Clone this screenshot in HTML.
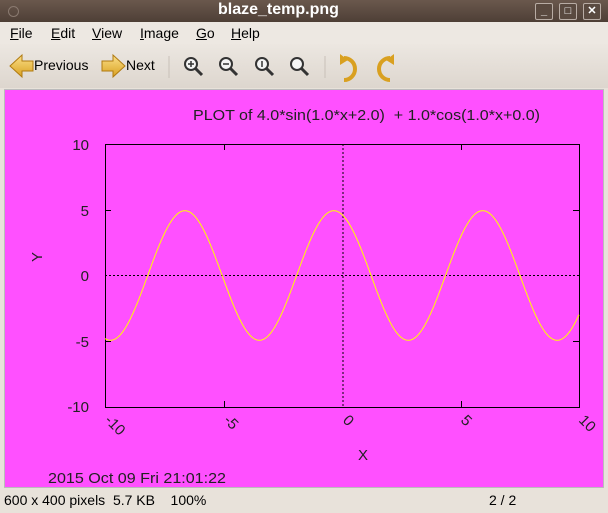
<!DOCTYPE html><html><head><style>
body{margin:0;width:608px;height:513px;overflow:hidden;background:#e8e2da;font-family:"Liberation Sans",sans-serif;font-size:14px;position:relative}
.t{position:absolute}
#title{left:0;top:0;width:608px;height:22px;background:linear-gradient(#6a584d,#4e3f36);color:#fff;font-weight:bold;font-size:16px;line-height:20px}
.wb{position:absolute;top:3px;width:16px;height:15px;border:1px solid #b8aca4;border-radius:2px;background:#5a4a40;color:#fff;font-size:11px;line-height:15px;text-align:center}
#menu{left:0;top:22px;width:608px;height:22px;background:#ede8e2}
#menu span{position:absolute;top:3px}
#tb{left:0;top:44px;width:608px;height:44px;background:linear-gradient(#ece7e1,#ddd6ce)}
#pink{left:4px;top:89px;width:600px;height:399px;background:#ff50ff;border:1px solid #bbb;box-sizing:border-box}
#status{left:0;top:488px;width:608px;height:25px;background:#e8e2da;font-size:14px}
</style></head><body>
<div class="t" id="title"><div style="position:absolute;left:8px;top:6px;width:9px;height:9px;border-radius:50%;border:1px solid #8a7a70"></div><span style="position:absolute;left:218px;top:0">blaze_temp.png</span>
<div class="wb" style="left:535px">_</div><div class="wb" style="left:559px">□</div><div class="wb" style="left:583px">✕</div></div>
<div class="t" id="menu"><span style="left:10px"><u>F</u>ile</span><span style="left:51px"><u>E</u>dit</span><span style="left:92px"><u>V</u>iew</span><span style="left:140px"><u>I</u>mage</span><span style="left:196px"><u>G</u>o</span><span style="left:231px"><u>H</u>elp</span></div>
<div class="t" id="tb">
<svg width="608" height="44" style="position:absolute;left:0;top:0">
<defs><linearGradient id="g" x1="0" y1="0" x2="0" y2="1"><stop offset="0" stop-color="#fbe08a"/><stop offset="1" stop-color="#d9a020"/></linearGradient></defs>
<path d="M10 22 L22 11 L22 17 L33 17 L33 27 L22 27 L22 33 Z" fill="url(#g)" stroke="#b07a10"/>
<path d="M125 22 L113 11 L113 17 L102 17 L102 27 L113 27 L113 33 Z" fill="url(#g)" stroke="#b07a10"/>
<line x1="169" y1="12" x2="169" y2="34" stroke="#c8c0b8"/>
<line x1="325" y1="12" x2="325" y2="34" stroke="#c8c0b8"/>
<g fill="#f4f4f4" stroke="#333" stroke-width="2">
<circle cx="191" cy="20" r="6"/><line x1="195" y1="24" x2="202" y2="31" stroke-width="3"/>
<circle cx="226" cy="20" r="6"/><line x1="230" y1="24" x2="237" y2="31" stroke-width="3"/>
<circle cx="262" cy="20" r="6"/><line x1="266" y1="24" x2="273" y2="31" stroke-width="3"/>
<circle cx="297" cy="20" r="6"/><line x1="301" y1="24" x2="308" y2="31" stroke-width="3"/>
</g>
<g stroke="#333" stroke-width="1.5"><line x1="188" y1="20" x2="194" y2="20"/><line x1="191" y1="17" x2="191" y2="23"/><line x1="223" y1="20" x2="229" y2="20"/><line x1="262" y1="17" x2="262" y2="23"/></g>
<path d="M344 14 A8 8 0 1 1 344 36" fill="none" stroke="#d9a020" stroke-width="4"/><path d="M340 10 L348 16 L340 21 Z" fill="#d9a020"/>
<path d="M390 14 A8 8 0 1 0 390 36" fill="none" stroke="#d9a020" stroke-width="4"/><path d="M394 10 L386 16 L394 21 Z" fill="#d9a020"/>
</svg>
<span class="t" style="left:34px;top:13px">Previous</span><span class="t" style="left:126px;top:13px">Next</span></div>
<div class="t" id="pink"></div>
<svg width="608" height="513" style="position:absolute;left:0;top:0" font-family="Liberation Sans" font-size="15">
<text x="193" y="120" fill="#222" textLength="347" lengthAdjust="spacingAndGlyphs" xml:space="preserve">PLOT of 4.0*sin(1.0*x+2.0)  + 1.0*cos(1.0*x+0.0)</text>
<rect x="105.5" y="144.5" width="474" height="263" fill="none" stroke="#000"/>
<line x1="343" y1="144" x2="343" y2="407" stroke="#000" stroke-dasharray="2,2"/>
<line x1="105" y1="275.5" x2="579" y2="275.5" stroke="#000" stroke-dasharray="2,2"/>
<g stroke="#000"><line x1="105" y1="210.5" x2="111" y2="210.5"/><line x1="105" y1="341.5" x2="111" y2="341.5"/><line x1="573" y1="210.5" x2="579" y2="210.5"/><line x1="573" y1="341.5" x2="579" y2="341.5"/>
<line x1="224.5" y1="401" x2="224.5" y2="407"/><line x1="461.5" y1="401" x2="461.5" y2="407"/><line x1="224.5" y1="144" x2="224.5" y2="150"/><line x1="461.5" y1="144" x2="461.5" y2="150"/></g>
<g fill="#222" text-anchor="end"><text x="89" y="150">10</text><text x="89" y="216">5</text><text x="89" y="281">0</text><text x="89" y="347">-5</text><text x="89" y="412">-10</text></g>
<g fill="#222"><text transform="translate(104,421) rotate(45)">-10</text><text transform="translate(223,421) rotate(45)">-5</text><text transform="translate(342,421) rotate(45)">0</text><text transform="translate(460,421) rotate(45)">5</text><text transform="translate(578,421) rotate(45)">10</text>
<text x="358" y="460">X</text><text transform="translate(42,262) rotate(-90)">Y</text>
<text x="48" y="483" textLength="178" lengthAdjust="spacingAndGlyphs">2015 Oct 09 Fri 21:01:22</text></g>
<path id="curve" fill="none" stroke="#ffff00" stroke-width="1"/>
</svg>
<div class="t" id="status"><span class="t" style="left:4px;top:4px">600 x 400 pixels&nbsp; 5.7 KB &nbsp;&nbsp; 100%</span><span class="t" style="left:489px;top:4px">2 / 2</span></div>
<script>
var d="";for(var i=0;i<=474;i++){var x=-10+i/23.7;var y=4*Math.sin(x+2)+Math.cos(x);d+=(i?"L":"M")+(105+i)+" "+(275.5-y*13.15).toFixed(2);}
document.getElementById("curve").setAttribute("d",d);
</script>
</body></html>
